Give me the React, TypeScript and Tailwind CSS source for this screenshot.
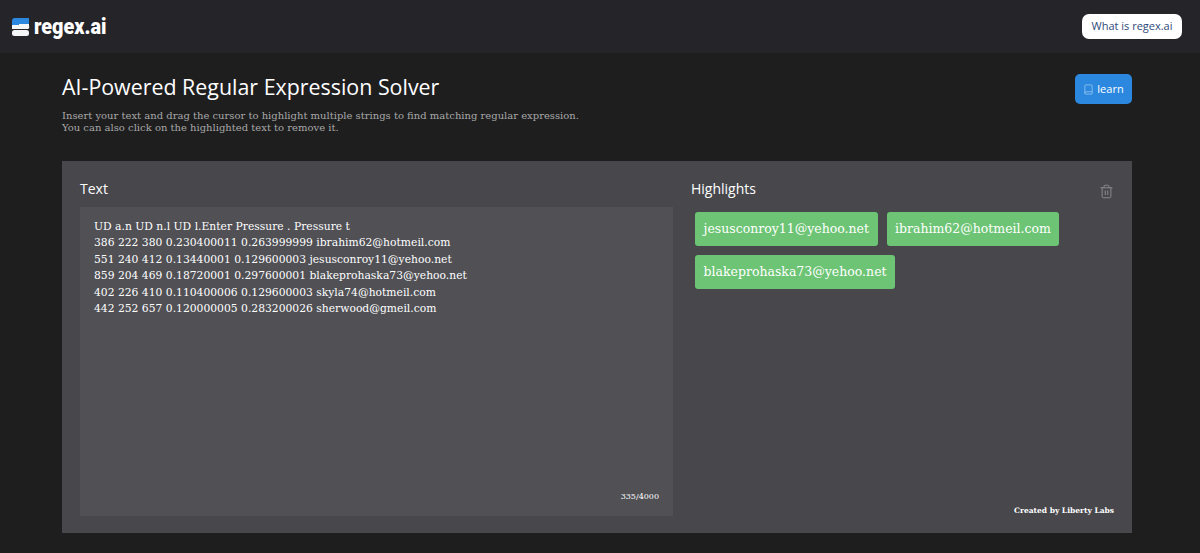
import { Book, Trash2 } from 'lucide-react'

const SANS = 'font-["Open_Sans",sans-serif]'
const SERIF = 'font-["DejaVu_Serif",serif]'

const LINES = [
  'UD a.n UD n.l UD l.Enter Pressure . Pressure t',
  '386 222 380 0.230400011 0.263999999 ibrahim62@hotmeil.com',
  '551 240 412 0.13440001 0.129600003 jesusconroy11@yehoo.net',
  '859 204 469 0.18720001 0.297600001 blakeprohaska73@yehoo.net',
  '402 226 410 0.110400006 0.129600003 skyla74@hotmeil.com',
  '442 252 657 0.120000005 0.283200026 sherwood@gmeil.com',
]

const HIGHLIGHTS = ['jesusconroy11@yehoo.net', 'ibrahim62@hotmeil.com', 'blakeprohaska73@yehoo.net']

function Logo() {
  return (
    <div className="flex items-center gap-[4px]">
      <svg width="19" height="20" viewBox="0 0 19 20">
        <path d="M3 1h15v6H8v1H1V4a3 3 0 0 1 2-3z" fill="#2b88de" />
        <path d="M1 8h7V7h10v2a2 2 0 0 1-2 3H1z" fill="#f4f6f8" />
        <rect x="1" y="13" width="17" height="6" rx="2.5" fill="#f4f6f8" />
        <rect x="1" y="12" width="8" height="1" fill="#25252a" />
      </svg>
      <span className='origin-left scale-x-[0.9] font-["Roboto",sans-serif] text-[22px] leading-none font-black text-white'>regex.ai</span>
    </div>
  )
}

export default function App() {
  return (
    <div className="h-[553px] overflow-hidden bg-[#1e1e1f] text-white">
      <header className="flex h-[53px] items-center justify-between bg-[#252529] pr-[18px] pl-[11px]">
        <Logo />
        <button className={`${SANS} h-[25px] w-[100px] rounded-[7px] bg-white text-[11px] font-medium text-[#2f4a7a]`}>
          What is regex.ai
        </button>
      </header>

      <main className="pr-[68px] pl-[62px]">
        <div className="flex items-start justify-between pt-[21px]">
          <div>
            <h1 className={`${SANS} text-[21.4px] leading-[26px] text-white`}>AI-Powered Regular Expression Solver</h1>
            <p className={`${SERIF} mt-[10px] text-[10px] leading-[12px] text-[#a8a8a8]`}>
              Insert your text and drag the cursor to highlight multiple strings to find matching regular expression.
              <br />
              You can also click on the highlighted text to remove it.
            </p>
          </div>
          <button className={`${SANS} flex h-[30px] w-[57px] items-center justify-center gap-[3px] rounded-[5px] bg-[#2b88de] text-[11px] text-white`}>
            <Book className="h-[11px] w-[11px] text-[#a8d0f2]" strokeWidth={1.5} />
            learn
          </button>
        </div>

        <section className="mt-[27px] flex h-[372px] gap-[18px] bg-[#47474c] pt-[18px] pr-[18px] pb-[17px] pl-[18px]">
          <div className="flex w-[593px] flex-col">
            <h2 className={`${SANS} text-[14px] leading-[20px] text-white`}>Text</h2>
            <div className={`${SERIF} relative mt-[8px] flex-1 bg-[#505055] px-[14px] pt-[12px] text-[10.75px] leading-[16.4px] text-white`}>
              {LINES.map((line) => (
                <div key={line}>{line}</div>
              ))}
              <span className="absolute right-[14px] bottom-[14px] text-[8px] leading-[10px]">335/4000</span>
            </div>
          </div>

          <div className="relative flex flex-1 flex-col">
            <div className="flex items-center justify-between">
              <h2 className={`${SANS} text-[14px] leading-[20px] text-white`}>Highlights</h2>
              <Trash2 className="mt-[5px] h-[15px] w-[15px] text-[#8e8e92]" strokeWidth={1.5} />
            </div>
            <div className="mt-[13px] flex flex-wrap gap-[9px] pl-[4px]">
              {HIGHLIGHTS.map((h) => (
                <span key={h} className={`${SERIF} flex h-[34px] items-center rounded-[3px] bg-[#6cc474] px-[8.5px] text-[12.5px] text-white`}>
                  {h}
                </span>
              ))}
            </div>
            <span className={`${SERIF} absolute right-0 bottom-0 text-[7.5px] leading-[10px] font-bold text-white`}>Created by Liberty Labs</span>
          </div>
        </section>
      </main>
    </div>
  )
}
